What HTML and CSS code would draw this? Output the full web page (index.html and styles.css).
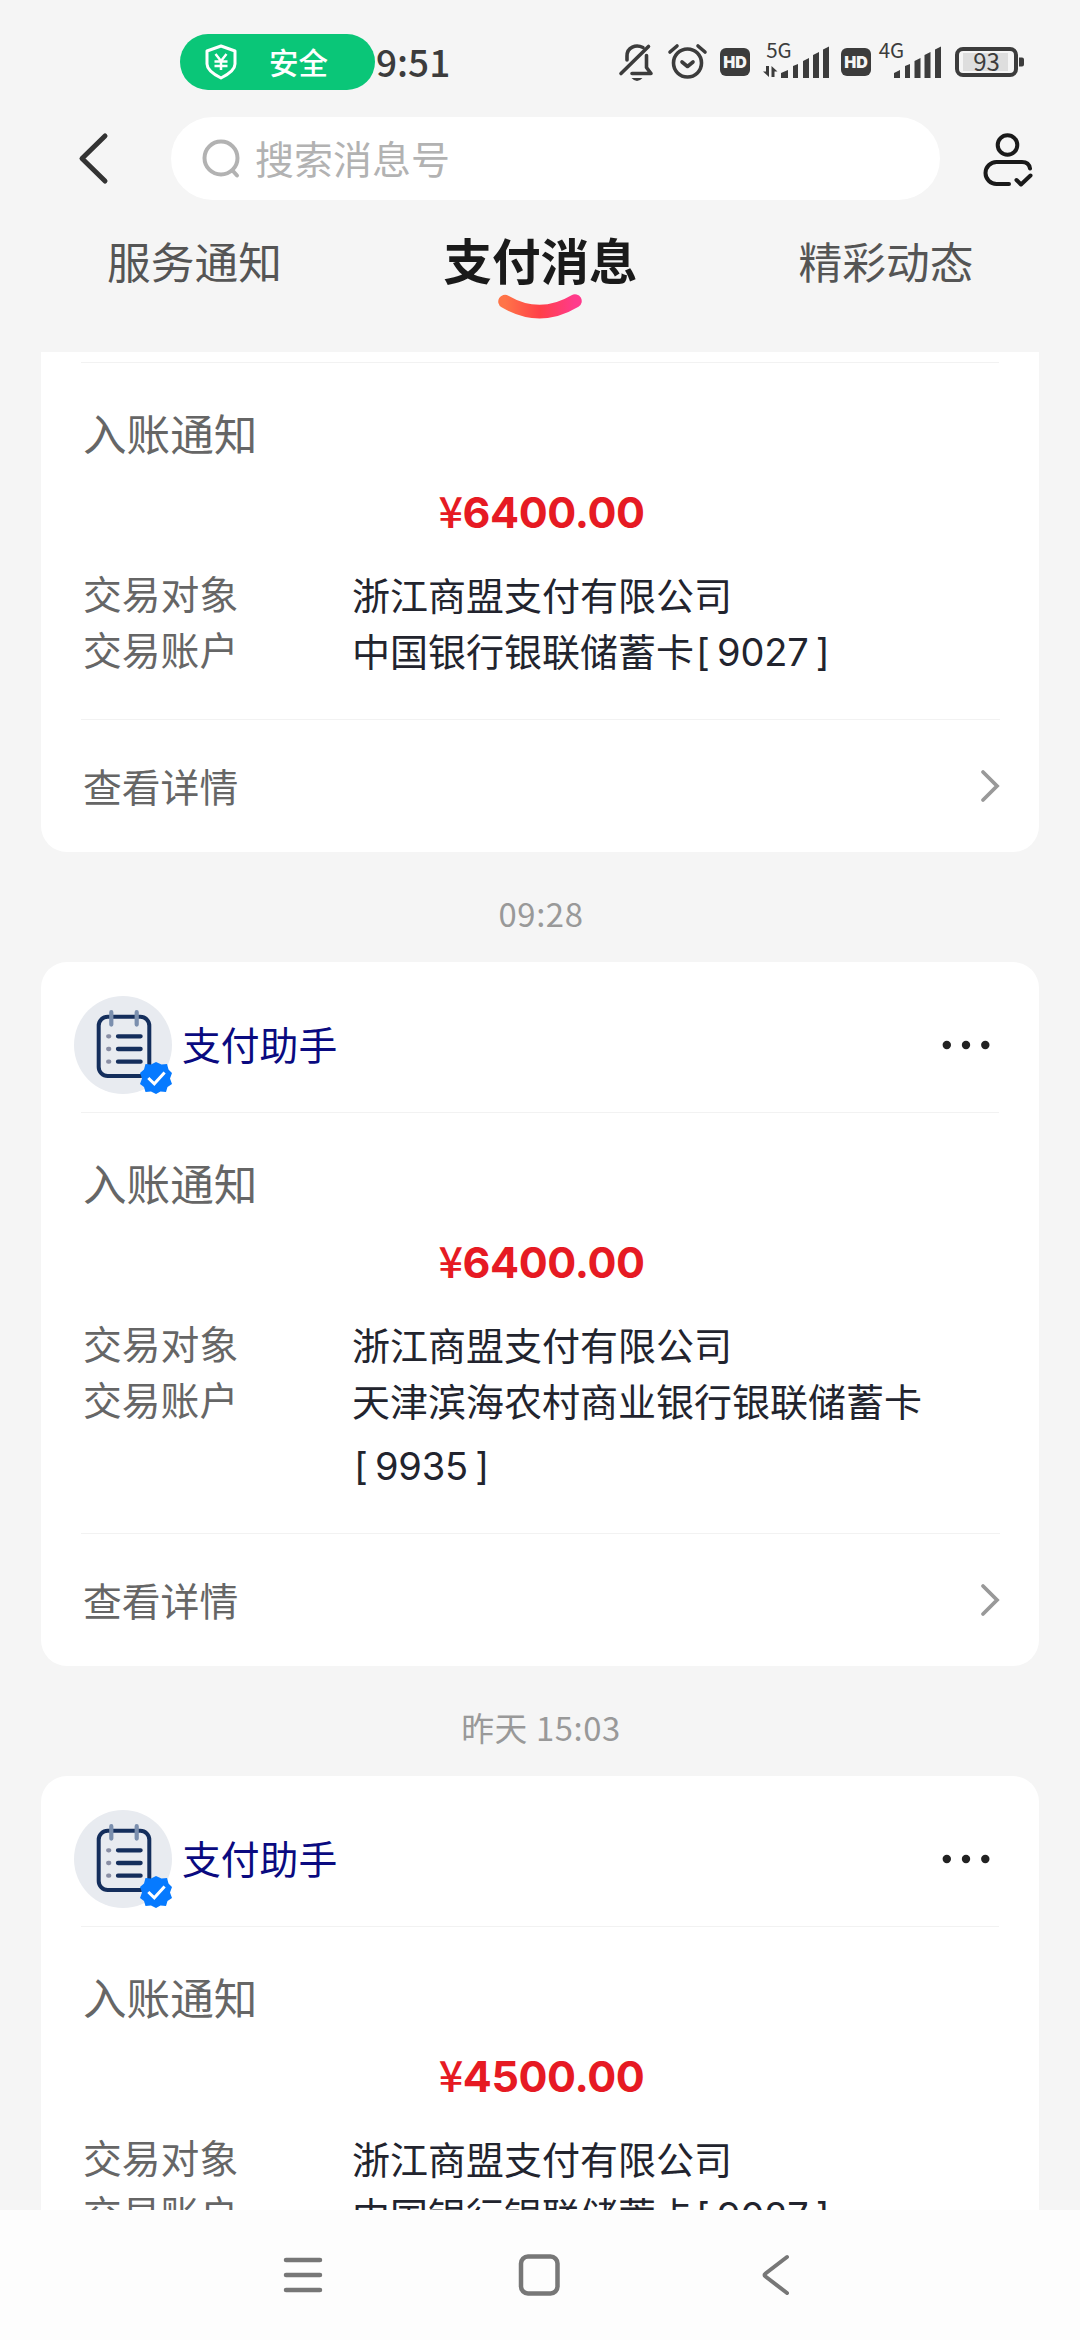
FILE: index.html
```html
<!DOCTYPE html>
<html lang="zh-CN">
<head>
<meta charset="utf-8">
<title>支付消息</title>
<link rel="stylesheet" href="styles.css">
</head>
<body>
<svg class="defs" width="0" height="0">
  <defs>
    <symbol id="helper" viewBox="0 0 99 99">
      <circle cx="49" cy="49" r="49" fill="#e8ebf0"/>
      <rect x="24.700" y="20.700" width="50.600" height="59.300" rx="9" fill="none" stroke="#142e5c" stroke-width="4"/>
      <g stroke="#142e5c" stroke-width="4.300" stroke-linecap="round"><path d="M44 40.300h22.600M44 53h22.600M44 65.700h22.600"/></g>
      <g stroke="#8a8fa5" stroke-width="4.300" stroke-linecap="round"><path d="M34.200 40.300h1M34.200 53h1M34.200 65.700h1"/></g>
      <g stroke="#7b8fae" stroke-width="4.200" stroke-linecap="round"><path d="M37.300 16.200v12.400M62.700 16.200v12.400"/></g>
      <path fill="#067aff" d="M82 66l5.500 2.500 5.500-.500 1.500 5.500 3.500 3.500-2 5.500 2 5.500-4.500 3-1.500 5-5.500-.500-4.500 2.500-5-2.500-5.500.500-1.500-5-4-3 2-5.500-2-5.500 4-3.500 1.500-5.500 5.500.500z"/>
      <path d="M74.300 82l6 5.800 10.300-11.300" fill="none" stroke="#fff" stroke-width="3"/>
    </symbol>
    <symbol id="more" viewBox="0 0 50 10"><g fill="#222"><circle cx="4.800" cy="5" r="4.200"/><circle cx="24" cy="5" r="4.200"/><circle cx="43.300" cy="5" r="4.200"/></g></symbol>
    <symbol id="arrow" viewBox="0 0 20 34"><path d="M3 3l14 14L3 31" fill="none" stroke="#999" stroke-width="3.800" stroke-linecap="round"/></symbol>
  </defs>
</svg>

<header class="status">
  <div class="safe">
    <svg width="32" height="36" viewBox="0 0 32 36" fill="none" stroke="#fff" stroke-width="3" stroke-linejoin="round"><path d="M16 2l14 5v13c0 6-6 10-14 14C8 30 2 26 2 20V7z"/><path stroke-linejoin="miter" d="M10.500 10l5.500 7 5.500-7M16 16v10M9.500 17.500h13M9.500 22h13" stroke-width="2.500"/></svg>
    <span>安全</span>
  </div>
  <span class="clock">9:51</span>
  <svg class="sysicons" width="440" height="80" viewBox="600 20 440 80">
    <g fill="none" stroke="#3c3c3c" stroke-width="3.600" stroke-linecap="round" stroke-linejoin="round">
      <path d="M621 73.500L648.500 46.500"/>
      <path d="M627 60v-4c0-9 9-12 16-8.500M632 73.500h19l-4.500-6v-12"/>
      <circle cx="687.500" cy="63" r="14"/><path d="M682 62l5.500 4.500 5.500-4.500M670 52l7-6M705 52l-7-6"/>
      <rect x="957" y="49" width="59" height="26" rx="6" stroke-width="4"/>
    </g>
    <path fill="#3c3c3c" d="M631.500 78h11q-5.500 6-11 0zM1019 57.500h3q2 0 2 2v5q0 2-2 2h-3z"/>
    <rect x="963" y="53" width="45" height="18" fill="#dedede"/>
    <g fill="#3c3c3c">
      <rect x="720" y="48" width="30" height="28" rx="6"/><rect x="841" y="48" width="30" height="28" rx="6"/>
      <path d="M781 73l7-3v8h-7zM793 66l5-2v14h-5zM803 61l6-3v20h-6zM813 55l6-3v26h-6zM823 49.500l6-3V78h-6z"/>
      <path d="M894 73l6-3v8h-6zM905 66l5-2v14h-5zM914.500 61l6-3v20h-6zM924.500 55l6-3v26h-6zM935 49.500l6-3V78h-6z"/>
      <path d="M766 66h3v11l-6-5.500h3zM771.500 77V66l6 5.500h-3V77z"/>
    </g>
    <g class="tiny">
      <text x="735" y="67.500" class="hd">HD</text><text x="856" y="67.500" class="hd">HD</text>
      <text x="779" y="58" class="net">5G</text><text x="891.500" y="58" class="net">4G</text>
      <text x="986.500" y="70.500" class="batt">93</text>
    </g>
  </svg>
</header>

<div class="topbar">
  <svg class="back" width="34" height="56" viewBox="0 0 34 56"><path d="M29 5L6 27.500 29 50" fill="none" stroke="#333" stroke-width="5" stroke-linecap="round" stroke-linejoin="round"/></svg>
  <div class="search">
    <svg width="38" height="40" viewBox="0 0 38 40" fill="none" stroke="#b2b2b2" stroke-width="4"><circle cx="19" cy="19" r="16.500"/><path d="M30.500 31.500l4.500 5" stroke-linecap="round"/></svg>
    <span>搜索消息号</span>
  </div>
  <svg class="person" width="52" height="56" viewBox="0 0 52 56" fill="none" stroke="#1a1a1a" stroke-width="4" stroke-linecap="round" stroke-linejoin="round"><circle cx="25.500" cy="14" r="9.800"/><path d="M27 53H14.500a11 11 0 0 1 0-22H40q7 0 8 6.500"/><path d="M34.500 49l4.500 4.500 9.500-9"/></svg>
</div>

<nav class="tabs">
  <span class="tab">服务通知</span>
  <span class="tab active">支付消息
    <svg class="smile" width="84" height="26" viewBox="0 0 84 26"><defs><linearGradient id="g"><stop offset="0" stop-color="#ff7448"/><stop offset=".5" stop-color="#ff4048"/><stop offset="1" stop-color="#ff3a8c"/></linearGradient></defs><path d="M7 7.500Q42 28 77 7" fill="none" stroke="url(#g)" stroke-width="13.500" stroke-linecap="round"/></svg>
  </span>
  <span class="tab">精彩动态</span>
</nav>

<main class="feed">
  <article class="card cut">
    <div class="body">
      <h2>入账通知</h2>
      <p class="amount"><i>¥</i>6400.00</p>
      <dl>
        <dt>交易对象</dt><dd>浙江商盟支付有限公司</dd>
        <dt>交易账户</dt><dd>中国银行银联储蓄卡<span class="num"><i>[</i>9027<i class="r">]</i></span></dd>
      </dl>
    </div>
    <footer><span>查看详情</span><svg width="20" height="34"><use href="#arrow"/></svg></footer>
  </article>
  <time>09:28</time>
  <article class="card">
    <div class="head"><svg class="avatar" width="99" height="99"><use href="#helper"/></svg><span>支付助手</span><svg class="more" width="50" height="10"><use href="#more"/></svg></div>
    <div class="body">
      <h2>入账通知</h2>
      <p class="amount"><i>¥</i>6400.00</p>
      <dl>
        <dt>交易对象</dt><dd>浙江商盟支付有限公司</dd>
        <dt>交易账户</dt><dd>天津滨海农村商业银行银联储蓄卡<br><span class="num"><i>[</i>9935<i class="r">]</i></span></dd>
      </dl>
    </div>
    <footer><span>查看详情</span><svg width="20" height="34"><use href="#arrow"/></svg></footer>
  </article>
  <time>昨天 15:03</time>
  <article class="card">
    <div class="head"><svg class="avatar" width="99" height="99"><use href="#helper"/></svg><span>支付助手</span><svg class="more" width="50" height="10"><use href="#more"/></svg></div>
    <div class="body">
      <h2>入账通知</h2>
      <p class="amount"><i>¥</i>4500.00</p>
      <dl>
        <dt>交易对象</dt><dd>浙江商盟支付有限公司</dd>
        <dt>交易账户</dt><dd>中国银行银联储蓄卡<span class="num"><i>[</i>9027<i class="r">]</i></span></dd>
      </dl>
    </div>
  </article>
</main>

<nav class="sysnav">
  <svg width="42" height="44" viewBox="0 0 42 44"><path d="M4 7h34M4 22h34M4 37h34" stroke="#777" stroke-width="4.500" stroke-linecap="round"/></svg>
  <svg width="42" height="44" viewBox="0 0 42 44"><rect x="3" y="3.500" width="36.500" height="37" rx="7" fill="none" stroke="#777" stroke-width="4.500"/></svg>
  <svg width="42" height="44" viewBox="0 0 42 44"><path d="M33 4L11.500 20.500q-2 1.500 0 3L33 40" fill="none" stroke="#777" stroke-width="4" stroke-linecap="round"/></svg>
</nav>
</body>
</html>
```
FILE: styles.css
```css
* { box-sizing: border-box; margin: 0; padding: 0; }
body {
  width: 1080px;
  height: 2340px;
  overflow: hidden;
  display: flex;
  flex-direction: column;
  background: #f5f5f5;
  font-family: "Noto Sans CJK SC", sans-serif;
}
.defs { position: absolute; }
svg { flex: none; }
i { font-style: normal; }

.status { height: 110px; padding: 20px 40px 0 180px; display: flex; align-items: flex-start; }
.safe {
  width: 195px; height: 56px; margin-top: 14px; padding-left: 25px;
  display: flex; align-items: center; gap: 32px;
  border-radius: 28px; background: #0ac678; color: #fff;
  font-size: 29.500px; font-weight: 500; line-height: 52px;
}
.safe span { margin-top: -2px; }
.clock { margin-top: 16px; margin-left: 1px; width: 80px; font-size: 37px; line-height: 50px; font-weight: 500; color: #3c3c3c; }
.sysicons { margin-left: auto; }
.tiny text { text-anchor: middle; fill: #3c3c3c; }
.tiny .hd { font: 900 16px Inter, sans-serif; fill: #f5f5f5; }
.tiny .net { font: 400 20.500px "Noto Sans CJK SC", sans-serif; }
.tiny .batt { font: 400 24px "Noto Sans CJK SC", sans-serif; }

.topbar { height: 97px; padding: 0 46px 0 76px; display: flex; align-items: center; }
.search {
  width: 769px; height: 83px; margin-left: 61px; padding-left: 31px;
  display: flex; align-items: center; gap: 15px;
  border-radius: 42px; background: #fff; color: #b2b2b2;
  font-size: 39px; line-height: 60px;
}
.search span { margin-top: -3px; }
.person { margin-left: auto; }

.tabs { height: 145px; padding-top: 20px; display: grid; grid-template-columns: 389px 303px 388px; justify-items: center; }
.tab { font-size: 43.700px; line-height: 66px; height: 66px; color: #555; }
.tab.active { position: relative; top: -1px; font-size: 48.500px; font-weight: 700; color: #1a1a1a; }
.smile { position: absolute; left: 55px; top: 68px; }

.feed { height: 1858px; overflow: hidden; padding: 0 41px; }
.card { background: #fff; border-radius: 26px; }
.card.cut { border-radius: 0 0 26px 26px; padding-top: 10px; }
.head {
  height: 150px; padding: 17px 49px 0 33px;
  display: flex; align-items: center;
  color: #0a0a80; font-size: 38.800px;
}
.head span { margin-left: 9px; margin-top: -5px; }
.more { margin: -1px -2px 0 auto; }
.body { margin: 0 40px; padding: 39px 2px 43px; border-top: 1px solid #f2f2f2; }
h2 { font-size: 43.600px; font-weight: 400; line-height: 60px; color: #666; }
.amount { margin-top: 12px; height: 70px; line-height: 70px; padding-left: 3px; text-align: center; font-family: Inter, "Noto Sans CJK SC", sans-serif; font-size: 43px; font-weight: 700; letter-spacing: -0.400px; color: #e61a23; }
.amount i { font-family: "Noto Sans CJK SC", sans-serif; font-weight: 500; }
dl { margin-top: 20px; display: grid; grid-template-columns: 269px 1fr; }
dt { font-size: 38.800px; line-height: 56px; color: #666; }
dd { font-size: 38px; line-height: 64px; margin: -2px 0 -6px; color: #22242e; }
.num { font-family: Inter, sans-serif; letter-spacing: -0.200px; line-height: 40px; }
.num i { display: inline-block; width: 23px; padding-left: 2px; }
.num .r { padding: 0 2px 0 0; text-align: right; }
footer {
  height: 133px; margin: 0 39px 0 40px; padding: 0 0 1px 2px;
  display: flex; align-items: center; justify-content: space-between;
  border-top: 1px solid #f2f2f2; color: #666; font-size: 38.800px;
}
footer span { margin-top: -2px; }
time { display: block; height: 110px; line-height: 122px; padding-left: 2px; text-align: center; font-size: 32.800px; letter-spacing: 0.600px; color: #999; }

.sysnav { flex: 1; background: #fdfdfd; display: flex; gap: 194px; padding: 43px 0 0 282px; }
```
